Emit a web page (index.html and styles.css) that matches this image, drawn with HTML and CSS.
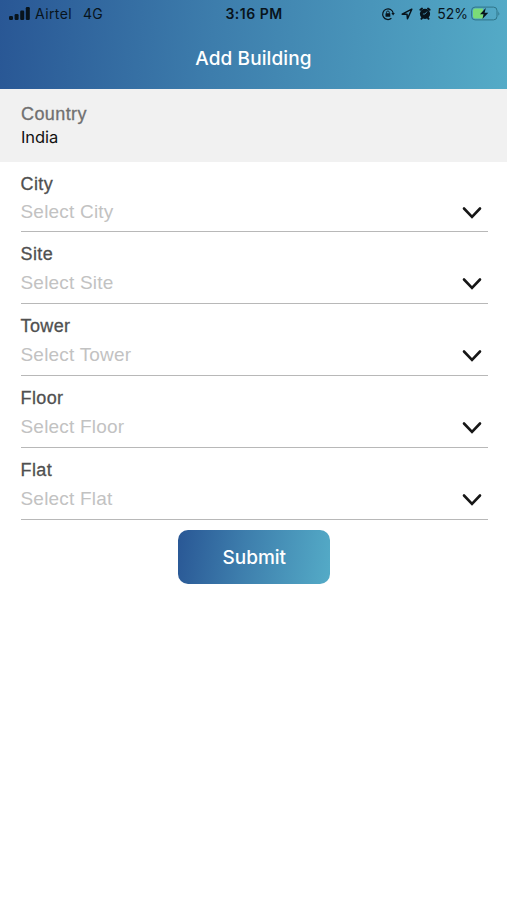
FILE: index.html
```
<!DOCTYPE html>
<html lang="en">
<head>
    <meta charset="UTF-8">
    <meta name="viewport" content="width=device-width, initial-scale=1.0">
    <title>Add Building</title>
    <link rel="stylesheet" href="styles.css">
</head>
<body>
    <header class="header">
        <div class="status">
            <div class="status-left">
                <svg class="signal" width="21" height="13" viewBox="0 0 21 13">
                    <rect x="0" y="9" width="4" height="4" rx="1.2"/>
                    <rect x="5.6" y="7" width="4" height="6" rx="1.2"/>
                    <rect x="11.2" y="3.6" width="4" height="9.4" rx="1.2"/>
                    <rect x="16.8" y="0" width="4" height="13" rx="1.2"/>
                </svg>
                <span class="carrier">Airtel</span>
                <span class="network">4G</span>
            </div>
            <span class="time">3:16 PM</span>
            <div class="status-right">
                <svg class="lock" width="14" height="14" viewBox="0 0 14 14">
                    <path d="M10.4 11.3A5.3 5.3 0 1 1 12.2 6.2" fill="none" stroke="#08141c" stroke-width="1.2"/>
                    <path d="M10.4 6.1H13.8L12.1 8.6Z"/>
                    <rect x="4.5" y="6.3" width="4.8" height="3.5" rx="0.5"/>
                    <path d="M5.5 6.5V5.4a1.4 1.4 0 0 1 2.8 0v1.1" fill="none" stroke="#08141c" stroke-width="0.9"/>
                </svg>
                <svg class="location" width="12" height="12" viewBox="0 0 12 12">
                    <path d="M1.2 6.2L10.8 1.2L6.5 10.8L6 6.2Z" fill="none" stroke="#08141c" stroke-width="1.5" stroke-linejoin="round"/>
                </svg>
                <svg class="alarm" width="12" height="13" viewBox="0 0 12 13">
                    <circle cx="6" cy="6.8" r="5.1"/>
                    <path d="M1.4 2.8L3 1.5M10.6 2.8L9 1.5M2.4 11.8L3.5 10.5M9.6 11.8L8.5 10.5" stroke="#08141c" stroke-width="1.9" stroke-linecap="round"/>
                    <path d="M8 4.6L6 7H3.9" fill="none" stroke="#4892b5" stroke-width="0.9"/>
                </svg>
                <span class="percent">52%</span>
                <svg class="battery" width="30" height="15" viewBox="0 0 30 15">
                    <rect x="0.6" y="1.1" width="25.4" height="12.8" rx="3.5" fill="none" stroke="#2f7488" stroke-width="1"/>
                    <path d="M4 2.6H12V12.4H4A2 2 0 0 1 2 10.4V4.6A2 2 0 0 1 4 2.6Z" fill="#7bdc78"/>
                    <path d="M27.4 5.2Q29.2 7.5 27.4 9.8Z" fill="#2f7488"/>
                    <path d="M14.8 2L9 8.3H12.6L11.4 13L17.3 6.7H13.6Z"/>
                </svg>
            </div>
        </div>
        <h1 class="title">Add Building</h1>
    </header>

    <main>
        <div class="country">
            <div class="label">Country</div>
            <div class="country-value">India</div>
        </div>

        <form class="form">
            <div class="field">
                <div class="label">City</div>
                <div class="select">
                    <span class="placeholder">Select City</span>
                    <svg class="chevron" width="20" height="13" viewBox="0 0 20 13"><path d="M2 2.5L10 10.8L18 2.5"/></svg>
                </div>
            </div>
            <div class="field">
                <div class="label">Site</div>
                <div class="select">
                    <span class="placeholder">Select Site</span>
                    <svg class="chevron" width="20" height="13" viewBox="0 0 20 13"><path d="M2 2.5L10 10.8L18 2.5"/></svg>
                </div>
            </div>
            <div class="field">
                <div class="label">Tower</div>
                <div class="select">
                    <span class="placeholder">Select Tower</span>
                    <svg class="chevron" width="20" height="13" viewBox="0 0 20 13"><path d="M2 2.5L10 10.8L18 2.5"/></svg>
                </div>
            </div>
            <div class="field">
                <div class="label">Floor</div>
                <div class="select">
                    <span class="placeholder">Select Floor</span>
                    <svg class="chevron" width="20" height="13" viewBox="0 0 20 13"><path d="M2 2.5L10 10.8L18 2.5"/></svg>
                </div>
            </div>
            <div class="field">
                <div class="label">Flat</div>
                <div class="select">
                    <span class="placeholder">Select Flat</span>
                    <svg class="chevron" width="20" height="13" viewBox="0 0 20 13"><path d="M2 2.5L10 10.8L18 2.5"/></svg>
                </div>
            </div>
            <button type="button" class="submit">Submit</button>
        </form>
    </main>
</body>
</html>
```
FILE: styles.css
```
* {
    box-sizing: border-box;
}
body {
    margin: 0;
    background-color: #fff;
    font-family: "Liberation Sans", Arial, sans-serif;
}
.header {
    height: 89px;
    background: linear-gradient(94deg, #295795 0%, #3d7dac 42%, #54abc7 100%);
}
.status {
    display: grid;
    grid-template-columns: 1fr auto 1fr;
    align-items: center;
    height: 27px;
    padding: 0 6px 0 9px;
    font-family: Inter, sans-serif;
    font-size: 14px;
    color: #08141c;
}
.status svg {
    fill: #08141c;
    flex: none;
}
.status-left, .status-right {
    display: flex;
    align-items: center;
}
.status-right {
    justify-content: flex-end;
}
.carrier {
    margin-left: 5px;
    letter-spacing: 0.4px;
}
.network {
    margin-left: 11px;
    letter-spacing: 0.2px;
}
.time {
    margin-right: 2px;
    font-weight: 600;
    font-size: 14px;
    letter-spacing: 0.5px;
}
.location {
    margin-left: 6px;
}
.alarm {
    margin-left: 6px;
}
.percent {
    margin-left: 6px;
}
.battery {
    margin-left: 3px;
}
.title {
    margin: 0;
    line-height: 63px;
    text-align: center;
    font-family: Inter, sans-serif;
    font-size: 19px;
    font-weight: 500;
    letter-spacing: 0.1px;
    color: #fff;
}
.country {
    height: 73px;
    padding: 14px 21px 0;
    background-color: #f1f1f1;
}
.label {
    font-size: 18px;
    line-height: 22px;
    letter-spacing: 0.4px;
    color: #505050;
    -webkit-text-stroke: 0.3px #505050;
}
.country .label {
    color: #707070;
    -webkit-text-stroke-color: #707070;
}
.country-value {
    font-family: Inter, sans-serif;
    font-size: 16.5px;
    line-height: 25px;
    letter-spacing: -0.1px;
    color: #111;
}
.form {
    display: flex;
    flex-direction: column;
    padding: 0 19px 0 20.5px;
}
.field {
    height: 72px;
    padding-top: 11px;
    border-bottom: 1.5px solid #b8b8b8;
}
.field:first-child {
    height: 70px;
}
.select {
    display: flex;
    justify-content: space-between;
    align-items: center;
    height: 36px;
    padding-right: 6px;
}
.field:first-child .select {
    height: 34px;
}
.placeholder {
    font-size: 19px;
    letter-spacing: 0.2px;
    color: #c2c2c2;
}
.chevron {
    margin-top: 1px;
    fill: none;
    stroke: #161616;
    stroke-width: 2.6;
    stroke-linecap: round;
}
.submit {
    align-self: center;
    width: 152px;
    height: 54px;
    margin-top: 10px;
    border: none;
    border-radius: 10px;
    background: linear-gradient(98deg, #295795 0%, #3d7dac 42%, #54abc7 100%);
    font-family: Inter, sans-serif;
    font-size: 19px;
    font-weight: 500;
    color: #fff;
}
```
